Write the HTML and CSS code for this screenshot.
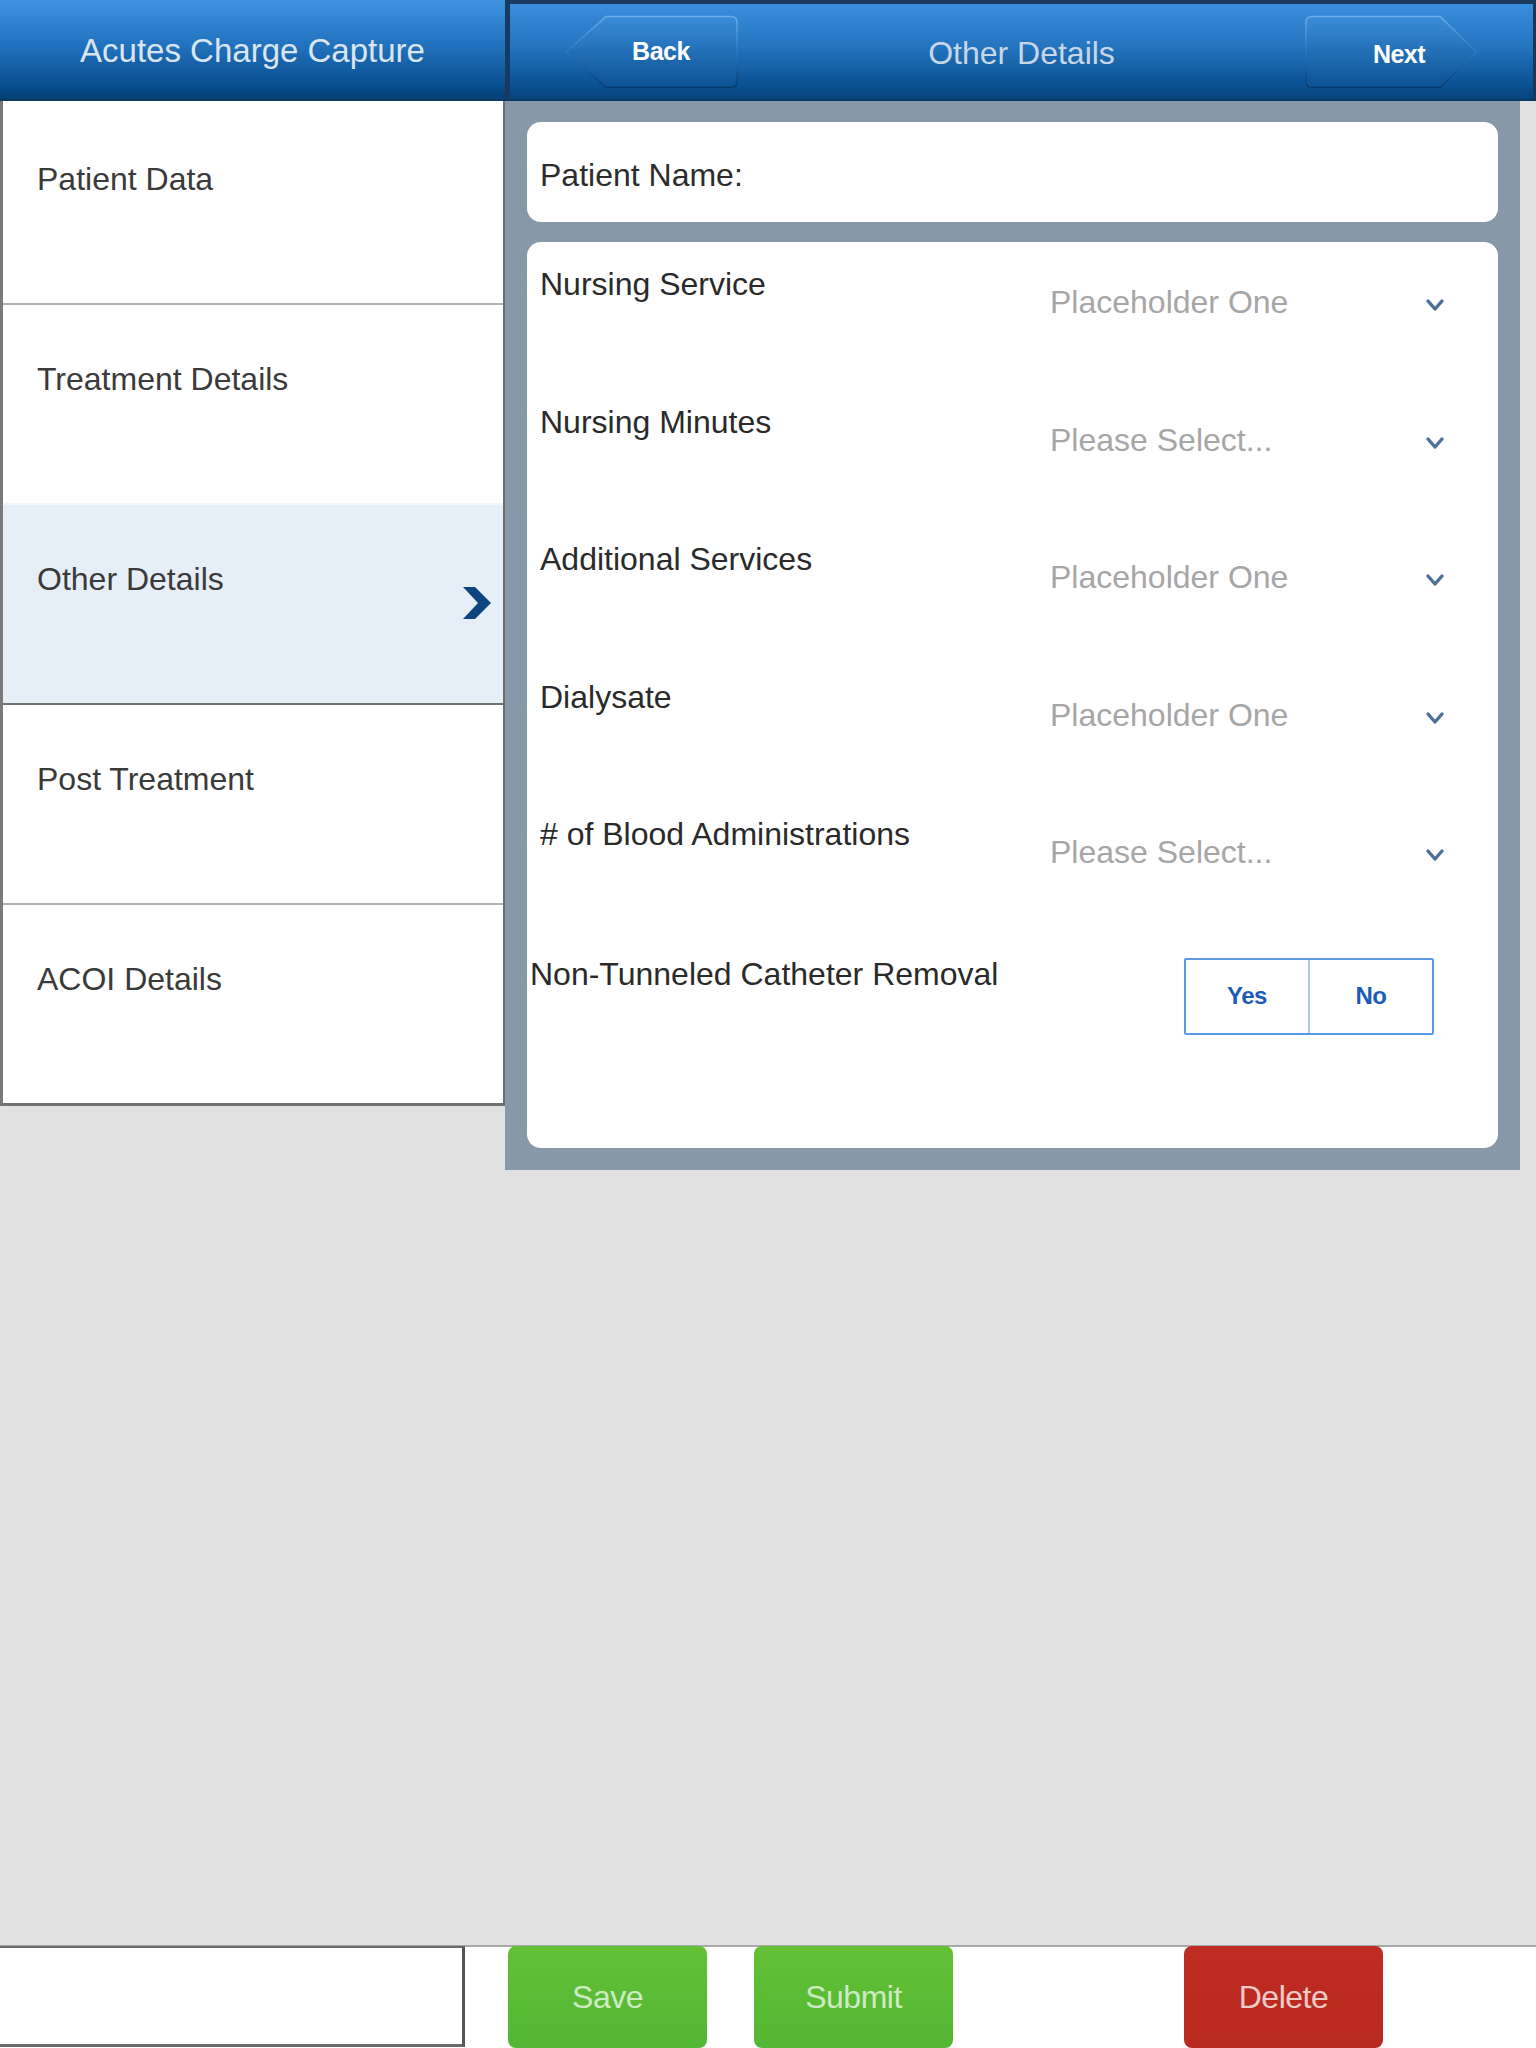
FILE: index.html
```html
<!DOCTYPE html>
<html lang="en">
<head>
<meta charset="utf-8">
<title>Acutes Charge Capture - Other Details</title>
<link rel="stylesheet" href="styles.css">
</head>
<body>
<div class="app">
  <div class="main">
    <div class="col-left">
      <header class="hdr-left"><span class="app-title">Acutes Charge Capture</span></header>
      <nav class="sidebar">
        <div class="nav-item"><span class="nav-label">Patient Data</span></div>
        <div class="nav-item no-sep"><span class="nav-label">Treatment Details</span></div>
        <div class="nav-item active"><span class="nav-label">Other Details</span>
          <svg class="nav-chev" width="30" height="36" viewBox="0 0 30 36"><polygon points="1,2 13,2 29,18 13,34 1,34 16,18" fill="#0d4580"/></svg>
        </div>
        <div class="nav-item"><span class="nav-label">Post Treatment</span></div>
        <div class="nav-item"><span class="nav-label">ACOI Details</span></div>
      </nav>
    </div>
    <div class="col-right">
      <header class="hdr-right">
        <div class="navbtn back">
          <svg class="navbtn-shape" width="174" height="74" viewBox="0 0 174 74">
            <defs>
              <linearGradient id="bfill" x1="0" y1="0" x2="0" y2="1"><stop offset="0" stop-color="#3a8ddb"/><stop offset="1" stop-color="#0c5192"/></linearGradient>
              <linearGradient id="bstroke" x1="0" y1="0" x2="0" y2="1"><stop offset="0" stop-color="#6cace8"/><stop offset="0.5" stop-color="#2a78c2"/><stop offset="1" stop-color="#08396a"/></linearGradient>
            </defs>
            <path d="M41,1.5 H166 Q172,1.5 172,7.5 V66.5 Q172,72.5 166,72.5 H41 L1.5,37 Z" fill="url(#bfill)" stroke="url(#bstroke)" stroke-width="1.5"/>
          </svg>
          <span class="navbtn-text back-text">Back</span>
        </div>
        <span class="page-title">Other Details</span>
        <div class="navbtn next">
          <svg class="navbtn-shape" width="174" height="74" viewBox="0 0 174 74">
            <defs>
              <linearGradient id="nfill" x1="0" y1="0" x2="0" y2="1"><stop offset="0" stop-color="#3a8ddb"/><stop offset="1" stop-color="#0c5192"/></linearGradient>
              <linearGradient id="nstroke" x1="0" y1="0" x2="0" y2="1"><stop offset="0" stop-color="#6cace8"/><stop offset="0.5" stop-color="#2a78c2"/><stop offset="1" stop-color="#08396a"/></linearGradient>
            </defs>
            <path d="M8,1.5 H136 L172.5,37 L136,72.5 H8 Q2,72.5 2,66.5 V7.5 Q2,1.5 8,1.5 Z" fill="url(#nfill)" stroke="url(#nstroke)" stroke-width="1.5"/>
          </svg>
          <span class="navbtn-text next-text">Next</span>
        </div>
      </header>
      <section class="panel">
        <div class="card name-card">Patient Name:</div>
        <div class="card form-card">
          <div class="frow">
            <span class="flabel">Nursing Service</span>
            <div class="fselect"><span class="fvalue">Placeholder One</span><svg class="fchev" width="20" height="16" viewBox="0 0 20 16"><polyline points="3,4 10,12 17,4" fill="none" stroke="#4d6f99" stroke-width="3.4" stroke-linecap="round" stroke-linejoin="round"/></svg></div>
          </div>
          <div class="frow">
            <span class="flabel">Nursing Minutes</span>
            <div class="fselect"><span class="fvalue">Please Select...</span><svg class="fchev" width="20" height="16" viewBox="0 0 20 16"><polyline points="3,4 10,12 17,4" fill="none" stroke="#4d6f99" stroke-width="3.4" stroke-linecap="round" stroke-linejoin="round"/></svg></div>
          </div>
          <div class="frow">
            <span class="flabel">Additional Services</span>
            <div class="fselect"><span class="fvalue">Placeholder One</span><svg class="fchev" width="20" height="16" viewBox="0 0 20 16"><polyline points="3,4 10,12 17,4" fill="none" stroke="#4d6f99" stroke-width="3.4" stroke-linecap="round" stroke-linejoin="round"/></svg></div>
          </div>
          <div class="frow">
            <span class="flabel">Dialysate</span>
            <div class="fselect"><span class="fvalue">Placeholder One</span><svg class="fchev" width="20" height="16" viewBox="0 0 20 16"><polyline points="3,4 10,12 17,4" fill="none" stroke="#4d6f99" stroke-width="3.4" stroke-linecap="round" stroke-linejoin="round"/></svg></div>
          </div>
          <div class="frow">
            <span class="flabel"># of Blood Administrations</span>
            <div class="fselect"><span class="fvalue">Please Select...</span><svg class="fchev" width="20" height="16" viewBox="0 0 20 16"><polyline points="3,4 10,12 17,4" fill="none" stroke="#4d6f99" stroke-width="3.4" stroke-linecap="round" stroke-linejoin="round"/></svg></div>
          </div>
          <div class="frow toggle-row">
            <span class="flabel wide">Non-Tunneled Catheter Removal</span>
            <div class="toggle"><span class="seg seg-yes">Yes</span><span class="seg">No</span></div>
          </div>
        </div>
      </section>
    </div>
  </div>
  <footer class="footer">
    <div class="footer-box"></div>
    <div class="fbtn green save">Save</div>
    <div class="fbtn green submit">Submit</div>
    <div class="fbtn red delete">Delete</div>
  </footer>
</div>
</body>
</html>
```

FILE: styles.css
```css
* { box-sizing: border-box; }

html, body {
  margin: 0;
  padding: 0;
}

body {
  width: 1536px;
  height: 2048px;
  background: #e1e1e1;
  font-family: "Liberation Sans", Arial, Helvetica, sans-serif;
  overflow: hidden;
}

.app {
  width: 1536px;
  height: 2048px;
  display: flex;
  flex-direction: column;
}

.main {
  flex: 1;
  display: flex;
  min-height: 0;
}

/* ---------- left column ---------- */
.col-left {
  width: 505px;
  display: flex;
  flex-direction: column;
}

.hdr-left {
  height: 101px;
  background: linear-gradient(#3f93e0 0%, #2273bf 45%, #0a4f8f 85%, #063f74 100%);
  border-bottom: 2px solid #0a3a66;
  display: flex;
  align-items: center;
  justify-content: center;
}

.app-title {
  color: #dbe5ef;
  font-size: 33px;
  line-height: 38px;
  margin-top: 2px;
}

.sidebar {
  background: #ffffff;
  border-left: 3px solid #7a7a7a;
  border-right: 2px solid #6d6d6d;
  border-bottom: 3px solid #717171;
  padding-top: 4px;
  display: flex;
  flex-direction: column;
}

.nav-item {
  height: 200px;
  border-bottom: 2px solid #b3b3b3;
  display: flex;
  justify-content: space-between;
  align-items: flex-start;
  background: #ffffff;
}

.nav-item:last-child {
  height: 198px;
  border-bottom: none;
}

.nav-item.no-sep {
  border-bottom-color: #f2f6fb;
}

.nav-item.active {
  background: #e6eef8;
  border-bottom: 2px solid #707070;
}

.nav-label {
  padding: 55px 0 0 34px;
  font-size: 32px;
  line-height: 38px;
  color: #3a3a3a;
}

.nav-chev {
  align-self: center;
  margin-right: 11px;
  margin-top: -2px;
}

/* ---------- right column ---------- */
.col-right {
  flex: 1;
  display: flex;
  flex-direction: column;
}

.hdr-right {
  height: 101px;
  background: linear-gradient(#3a8edc 0%, #2474c0 45%, #0b5192 85%, #07437b 100%);
  border-top: 4px solid #1a3b5f;
  border-left: 5px solid #163a62;
  border-right: 3px solid #17385c;
  border-bottom: 2px solid #0a3a66;
  display: flex;
  align-items: center;
  justify-content: space-between;
  padding: 0 55px 0 55px;
}

.navbtn {
  display: grid;
  width: 174px;
  height: 74px;
}

.navbtn-shape,
.navbtn-text {
  grid-area: 1 / 1;
}

.navbtn-text {
  display: flex;
  align-items: center;
  justify-content: center;
  color: #ffffff;
  font-weight: bold;
  font-size: 25px;
  letter-spacing: -0.5px;
}

.back-text {
  padding-left: 18px;
}

.next-text {
  padding-left: 16px;
  padding-top: 5px;
}

.page-title {
  color: #c8d7e6;
  font-size: 32px;
  line-height: 38px;
  margin-top: 2px;
}

.panel {
  width: 1015px;
  height: 1069px;
  background: #8698a9;
  padding: 21px 22px 22px 22px;
  display: flex;
  flex-direction: column;
  gap: 20px;
}

.card {
  background: #ffffff;
  border-radius: 14px;
}

.name-card {
  height: 100px;
  padding: 34px 0 0 13px;
  font-size: 32px;
  line-height: 38px;
  color: #2c2c2c;
}

.form-card {
  flex: 1;
  padding: 23px 0 0 13px;
}

.frow {
  display: flex;
  height: 137.5px;
  align-items: flex-start;
}

.flabel {
  width: 510px;
  font-size: 32px;
  line-height: 38px;
  color: #2a2a2a;
  white-space: nowrap;
}

.fselect {
  width: 395px;
  margin-top: 18px;
  display: flex;
  justify-content: space-between;
  align-items: flex-start;
}

.fvalue {
  font-size: 32px;
  line-height: 38px;
  color: #a6a6a6;
}

.fchev {
  margin-top: 14px;
}

.toggle-row .flabel.wide {
  width: 520px;
  margin-left: -10px;
  padding-top: 2px;
}

.toggle {
  margin-left: 134px;
  margin-top: 5px;
  width: 250px;
  height: 77px;
  border: 2px solid #5b9be6;
  border-radius: 2px;
  display: flex;
}

.seg {
  flex: 1;
  display: flex;
  align-items: center;
  justify-content: center;
  font-weight: bold;
  font-size: 24px;
  color: #1c5cb8;
  letter-spacing: -0.5px;
}

.seg-yes {
  flex: 0 0 124px;
  border-right: 2px solid #a9cbf2;
}

/* ---------- footer ---------- */
.footer {
  height: 103px;
  background: #ffffff;
  border-top: 2px solid #a9a9a9;
  display: flex;
  align-items: flex-start;
}

.footer-box {
  width: 465px;
  height: 101px;
  background: #ffffff;
  border-top: 2px solid #6a6a6a;
  border-right: 3px solid #555555;
  border-bottom: 3px solid #6a6a6a;
  margin-top: -1px;
}

.fbtn {
  width: 199px;
  height: 102px;
  margin-top: -1px;
  border-radius: 8px;
  display: flex;
  align-items: center;
  justify-content: center;
  font-size: 32px;
  letter-spacing: -0.5px;
}

.green {
  background: linear-gradient(#62c135, #53b634);
  color: #cdebc2;
}

.red {
  background: linear-gradient(#bf2c24, #b8291f);
  color: #f0cbc8;
}

.save { margin-left: 43px; }
.submit { margin-left: 47px; }
.delete { margin-left: 231px; }
```
